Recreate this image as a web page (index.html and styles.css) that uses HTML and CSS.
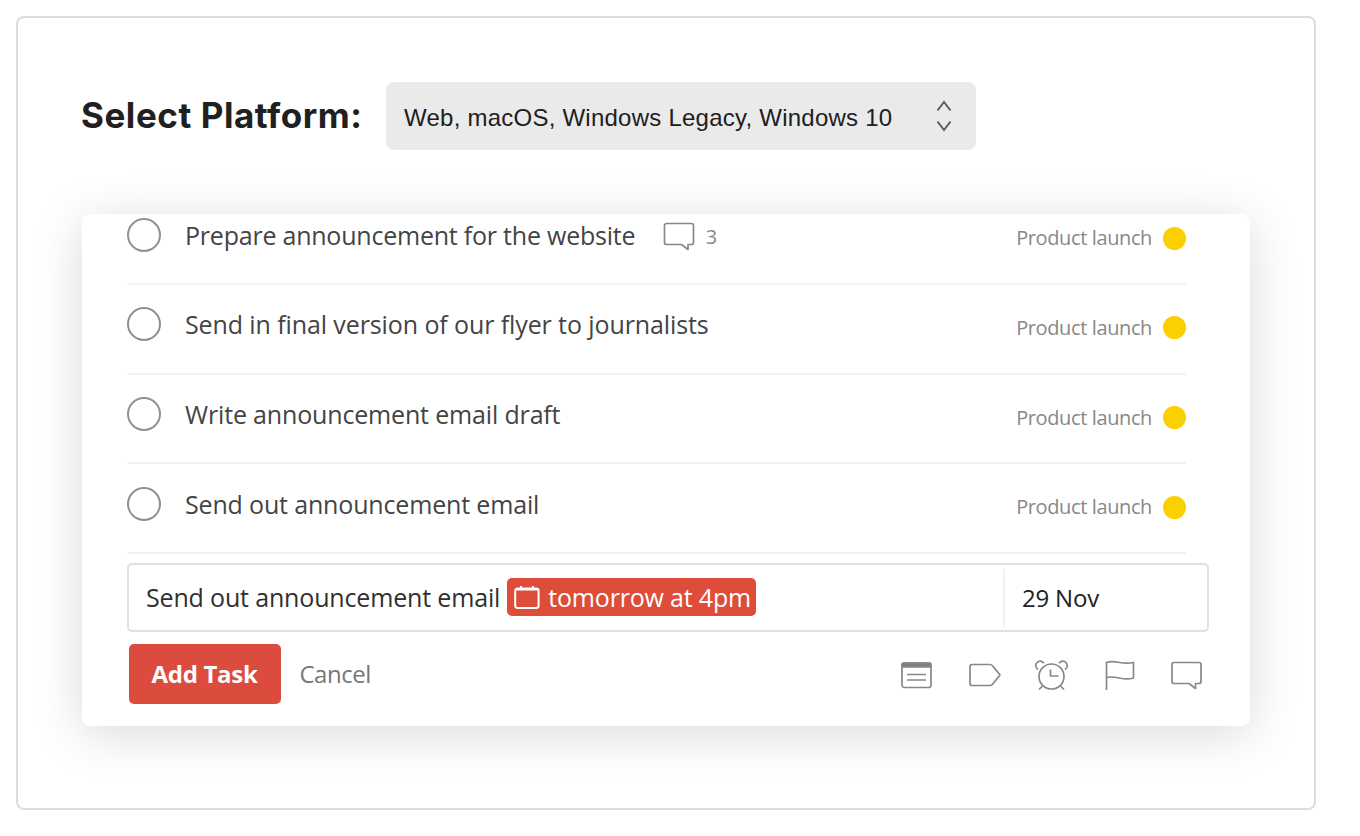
FILE: index.html
```html
<!DOCTYPE html>
<html lang="en">
<head>
<meta charset="utf-8">
<title>Select Platform</title>
<link rel="stylesheet" href="styles.css">
</head>
<body>
<main class="panel">
  <header class="platform">
    <h1 class="platform-title">Select Platform:</h1>
    <div class="select">
      <span class="select-value">Web, macOS, Windows Legacy, Windows 10</span>
      <svg class="select-arrows" width="16" height="32" viewBox="0 0 16 32"><path d="M1.500 10.500 8 2l6.500 8.500M1.500 21.500 8 30l6.500-8.500"/></svg>
    </div>
  </header>
  <section class="card">
    <ul class="tasks">
      <li class="task"><span class="check"></span><span class="task-name website">Prepare announcement for the website</span>
        <svg class="icon comment" width="32" height="30" viewBox="0 0 32 30"><path d="M3.500 1.500h25a2 2 0 0 1 2 2v17a2 2 0 0 1-2 2h-3.500v5l-6.500-5h-15a2 2 0 0 1-2-2v-17a2 2 0 0 1 2-2z"/></svg>
        <span class="count">3</span><span class="project">Product launch</span><span class="dot"></span></li>
      <li class="task"><span class="check"></span><span class="task-name flyer">Send in final version of our flyer to journalists</span><span class="project">Product launch</span><span class="dot"></span></li>
      <li class="task"><span class="check"></span><span class="task-name">Write announcement email draft</span><span class="project">Product launch</span><span class="dot"></span></li>
      <li class="task"><span class="check"></span><span class="task-name">Send out announcement email</span><span class="project">Product launch</span><span class="dot"></span></li>
    </ul>
    <div class="entry">
      <span class="entry-text">Send out announcement email</span>
      <span class="chip">
        <svg width="26" height="24" viewBox="0 0 26 24"><rect x="1.200" y="3.500" width="23.400" height="19.500" rx="2.500"/><path d="M1.500 4.500h23M7 1v4M19 1v4"/></svg>
        <span class="chip-text">tomorrow at 4pm</span>
      </span>
      <span class="entry-date">29 Nov</span>
    </div>
    <footer class="actions">
      <button class="add">Add Task</button>
      <span class="cancel">Cancel</span>
      <div class="tools">
        <svg class="icon" width="36" height="36" viewBox="0 0 36 36"><rect x="3" y="6" width="29" height="24.500" rx="2.500"/><path class="fill" d="M4.500 6h26a1.500 1.500 0 0 1 1.500 1.500V10H3V7.500A1.500 1.500 0 0 1 4.500 6z"/><path d="M8 17.500h19M8 23h19"/></svg>
        <svg class="icon" width="36" height="36" viewBox="0 0 36 36"><path d="M5 7.500H23a3 3 0 0 1 2.500 1.200l7.500 9.300-7.500 9.300a3 3 0 0 1-2.500 1.200H5a2 2 0 0 1-2-2v-17a2 2 0 0 1 2-2z"/></svg>
        <svg class="icon" width="36" height="36" viewBox="0 0 36 36"><circle cx="17.500" cy="19.500" r="12.500"/><path d="M16.500 12.500v6.500h8M8.500 29 5 32.500M26.500 29l3.500 3.500M4 12.500C-2 8.500 5 .5 10 6.200M31 12.500C37 8.500 30 .5 25 6.200"/></svg>
        <svg class="icon" width="36" height="36" viewBox="0 0 36 36"><path d="M4.500 33V5.500c9-3.500 14 3 27 0v15.500c-11 3.500-16.500-3-27-.5"/></svg>
        <svg class="icon" width="36" height="36" viewBox="0 0 36 36"><path d="M5 5.500h25a2 2 0 0 1 2 2v17a2 2 0 0 1-2 2h-3.500v5l-6.500-5H5a2 2 0 0 1-2-2v-17a2 2 0 0 1 2-2z"/></svg>
      </div>
    </footer>
  </section>
</main>
</body>
</html>
```
FILE: styles.css
```css
* { box-sizing: border-box; }
body { margin: 0; background: #fff; font-family: "Open Sans", sans-serif; }
.panel {
  width: 1300px; height: 794px; margin: 16px 0 0 16px; padding: 64px;
  border: 2px solid #dcdcdc; border-radius: 8px;
}
.platform { display: flex; align-items: center; height: 68px; }
.platform-title {
  width: 305px; margin: -2px 0 0 -1px; white-space: nowrap; color: #202020;
  font: 700 35px/44px Inter, sans-serif; letter-spacing: .55px;
}
.select {
  display: flex; align-items: center; justify-content: space-between;
  width: 590px; height: 68px; padding: 3px 24px 0 18px;
  background: #eaeaea; border-radius: 8px;
}
.select-value { font: 24px/32px "Liberation Sans", sans-serif; letter-spacing: .24px; color: #202020; white-space: nowrap; }
.select-arrows { fill: none; stroke: #555; stroke-width: 1.800; margin-top: -4px; }
.card {
  width: 1168px; height: 512px; margin-top: 64px; overflow: hidden;
  background: #fff; border-radius: 8px; box-shadow: 0 8px 50px rgba(0, 0, 0, .15);
}
.tasks { list-style: none; margin: -18.500px 64px 0 45px; padding: 0; }
.task {
  display: flex; align-items: center; height: 89.660px; padding-bottom: 9px;
  border-bottom: 2px solid #f2f2f2; white-space: nowrap;
}
.check { flex: none; width: 34px; height: 34px; margin-right: 24px; border: 2px solid #919191; border-radius: 50%; }
.task-name { font-size: 25px; line-height: 34px; letter-spacing: -.160px; color: #444; }
.website { letter-spacing: -.220px; }
.flyer { letter-spacing: -.100px; }
.icon { display: block; fill: none; stroke: #888; stroke-width: 1.700; stroke-linejoin: round; }
.icon .fill { fill: #808080; }
.comment { margin: 4px 0 0 28px; }
.count { margin: 3px 0 0 10.500px; font-size: 20px; color: #888; }
.project { margin: 7px 11px 0 auto; font-size: 20px; line-height: 28px; letter-spacing: -.380px; color: #888; }
.dot { width: 23px; height: 23px; margin-top: 7px; border-radius: 50%; background: #fad000; }
.entry {
  display: flex; align-items: center; width: 1082px; height: 69px; margin: 9px 0 0 45px; padding-left: 17px;
  border: 2px solid #e0e0e0; border-radius: 5px; white-space: nowrap;
}
.entry-text { margin-top: -2px; font-size: 25px; line-height: 34px; letter-spacing: -.160px; color: #303030; }
.chip {
  display: flex; align-items: center; width: 249px; height: 38px; margin: -2px 0 0 7px; padding-left: 7px; gap: 8px;
  background: #de4c3a; border-radius: 5px; color: #fff; font-size: 25px;
}
.chip svg { fill: none; stroke: #fff; stroke-width: 2; }
.chip-text { line-height: 34px; letter-spacing: -.180px; }
.entry-date { width: 204px; height: 58px; margin-left: auto; padding-left: 17px; border-left: 2px solid #f0f0f0; font-size: 24px; line-height: 58px; letter-spacing: -.200px; color: #222; }
.actions { display: flex; align-items: center; margin: 12px 45px 0 46.500px; height: 60px; }
.add { width: 152px; height: 60px; padding: 0; border: 0; border-radius: 5px; background: #dc4c3e; color: #fff; font: 700 24px/34px "Open Sans", sans-serif; letter-spacing: -.300px; white-space: nowrap; }
.cancel { margin-left: 19px; font-size: 24px; line-height: 34px; letter-spacing: -.500px; color: #777; }
.tools { display: flex; gap: 31.500px; margin: 2px 0 0 auto; }
```
